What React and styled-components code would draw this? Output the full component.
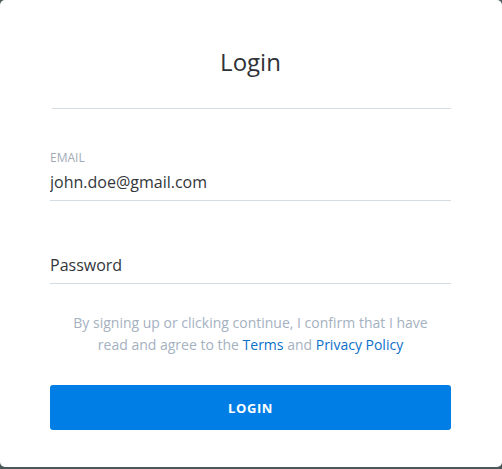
import React from 'react';
import styled, { createGlobalStyle } from 'styled-components';

const GlobalStyle = createGlobalStyle`
  html, body {
    margin: 0;
    padding: 0;
    background: #4b5859;
    font-family: "Open Sans", "Noto Sans", sans-serif;
  }
  * {
    box-sizing: border-box;
  }
`;

const Card = styled.div`
  width: 502px;
  height: 467px;
  background: #fff;
  border-radius: 5px;
  padding: 45px 51px 0 50px;
  display: flex;
  flex-direction: column;
`;

const Title = styled.h1`
  margin: 0;
  font-size: 24px;
  line-height: 34px;
  font-weight: 400;
  color: #2f3236;
  text-align: center;
`;

const Divider = styled.hr`
  margin: 29px 0 0 2px;
  border: 0;
  border-top: 1px solid #d5dde5;
`;

const Form = styled.form`
  display: flex;
  flex-direction: column;
  margin-top: 41px;
`;

const Field = styled.label`
  display: flex;
  flex-direction: column;
  gap: 5px;
  margin-bottom: ${p => p.last ? '0' : '32px'};
`;

const FieldLabel = styled.span`
  font-size: 12px;
  line-height: 15px;
  height: 15px;
  color: #a3acb6;
  text-transform: uppercase;
`;

const Input = styled.input`
  height: 31px;
  padding: 0 0 6px 0;
  border: 0;
  border-bottom: 1px solid #d3dbe3;
  font-family: inherit;
  font-size: 16px;
  color: #33363a;
  background: transparent;
  outline: none;

  &::placeholder {
    color: #33363a;
    opacity: 1;
  }
`;

const Terms = styled.p`
  margin: 28px 0 0;
  padding: 0 20px;
  font-size: 14px;
  line-height: 22px;
  color: #a5b1bf;
  text-align: center;
`;

const TermsLink = styled.a`
  color: #0a70c9;
  text-decoration: none;
`;

const Button = styled.button`
  margin-top: 29px;
  height: 45px;
  border: 0;
  border-radius: 3px;
  background: #007ee5;
  color: #fff;
  font-family: inherit;
  font-size: 13px;
  font-weight: 700;
  letter-spacing: 0.6px;
  cursor: pointer;
`;

export default function App() {
  return (
    <>
      <GlobalStyle />
      <Card>
        <Title>Login</Title>
        <Divider />
        <Form onSubmit={e => e.preventDefault()}>
          <Field>
            <FieldLabel>Email</FieldLabel>
            <Input type="email" defaultValue="john.doe@gmail.com" />
          </Field>
          <Field last>
            <FieldLabel />
            <Input type="password" placeholder="Password" />
          </Field>
          <Terms>
            By signing up or clicking continue, I confirm that I have read and agree to the{' '}
            <TermsLink href="#">Terms</TermsLink> and <TermsLink href="#">Privacy Policy</TermsLink>
          </Terms>
          <Button type="submit">LOGIN</Button>
        </Form>
      </Card>
    </>
  );
}
